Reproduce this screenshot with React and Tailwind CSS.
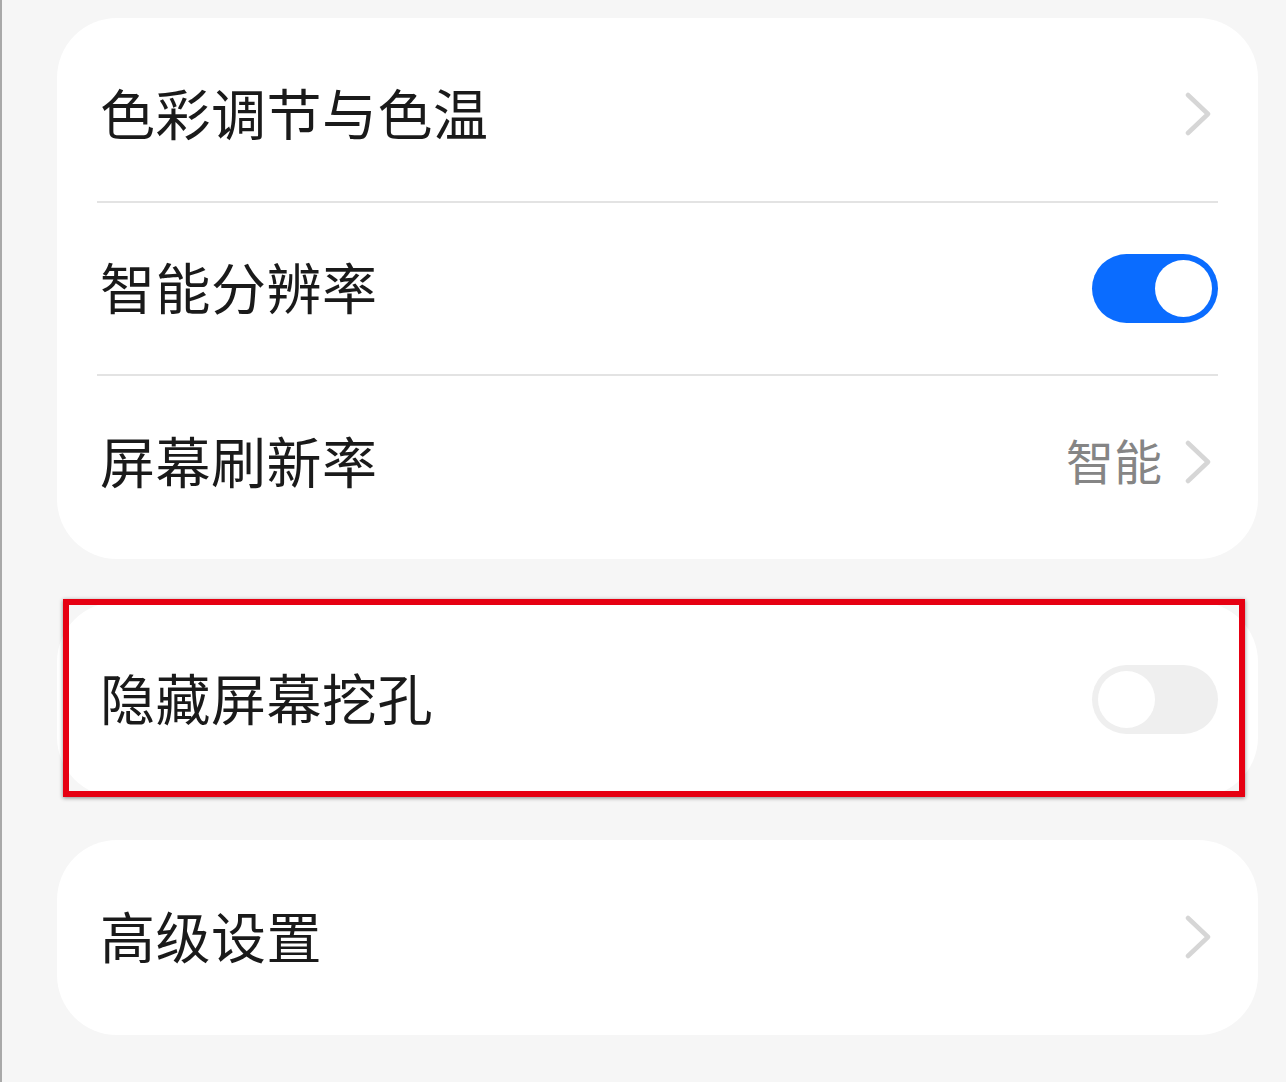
import React from "react";

const font = { fontFamily: '"Noto Sans CJK SC", "Noto Sans", sans-serif' };

function Chevron() {
  return (
    <svg width="28" height="44" viewBox="0 0 28 44" className="shrink-0">
      <path d="M4 3 L24 22 L4 41" fill="none" stroke="#d6d6d6" strokeWidth="4.5" strokeLinecap="round" strokeLinejoin="round" />
    </svg>
  );
}

function Toggle({ on }) {
  return (
    <div
      className={`w-[126px] h-[69px] rounded-full p-[6px] flex items-center ${
        on ? "bg-[#0a6cff] justify-end" : "bg-[#efefef] justify-start"
      }`}
    >
      <div className="w-[57px] h-[57px] rounded-full bg-white" />
    </div>
  );
}

function Row({ label, value, toggle, chevron, height = "h-[173px]" }) {
  return (
    <div className={`flex items-center justify-between ${height} pl-[3px]`}>
      <span className="text-[55px] leading-none text-[#1a1a1a] tracking-[0.5px] pb-[7px]">{label}</span>
      <div className="flex items-center gap-[22px]">
        {value && <span className="text-[48px] leading-none text-[#858585] pb-[8px]">{value}</span>}
        {toggle !== undefined && <Toggle on={toggle} />}
        {chevron && (
          <div className="pr-[6px] pb-[2px]">
            <Chevron />
          </div>
        )}
      </div>
    </div>
  );
}

export default function App() {
  return (
    <div
      className="w-[1286px] h-[1082px] bg-[#f6f6f6] border-l-2 border-[#a9a9a9] pl-[55px] pr-[28px] pt-[18px] flex flex-col gap-[43px]"
      style={font}
    >
      {/* display group */}
      <div className="bg-white rounded-[60px] px-[40px] py-[10px]">
        <Row label="色彩调节与色温" chevron />
        <div className="h-[2px] bg-[#e3e3e3]" />
        <Row label="智能分辨率" toggle={true} height="h-[171px]" />
        <div className="h-[2px] bg-[#e3e3e3]" />
        <Row label="屏幕刷新率" value="智能" chevron />
      </div>

      {/* highlighted row */}
      <div className="relative">
        <div className="bg-white rounded-[60px] px-[40px]">
          <Row label="隐藏屏幕挖孔" toggle={false} height="h-[195px]" />
        </div>
        <div className="absolute left-[6px] top-[-3px] w-[1182px] h-[198px] border-[6px] border-[#e60012] shadow-[0_1px_4px_rgba(0,0,0,0.45)] pointer-events-none" />
      </div>

      <div className="bg-white rounded-[60px] px-[40px]">
        <Row label="高级设置" chevron height="h-[195px]" />
      </div>
    </div>
  );
}
